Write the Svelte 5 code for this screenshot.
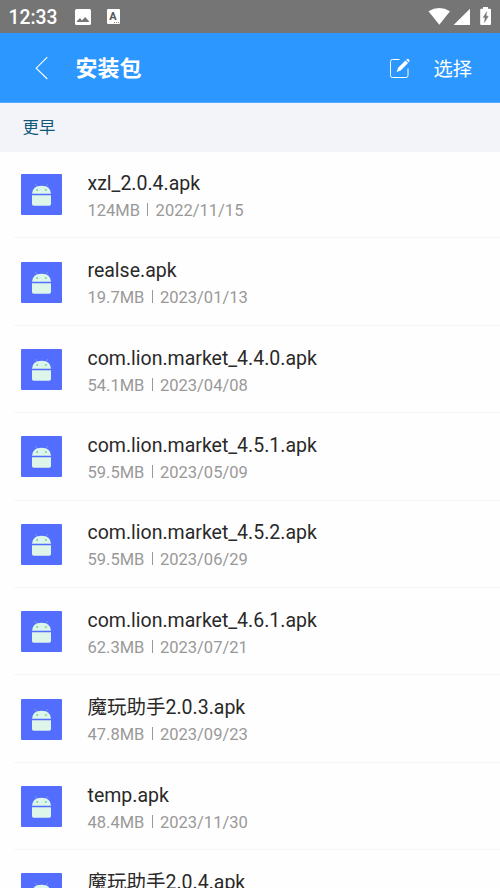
<script lang="ts">
	interface PackageFile {
		name: string;
		size: string;
		date: string;
	}

	const files: PackageFile[] = [
		{ name: 'xzl_2.0.4.apk', size: '124MB', date: '2022/11/15' },
		{ name: 'realse.apk', size: '19.7MB', date: '2023/01/13' },
		{ name: 'com.lion.market_4.4.0.apk', size: '54.1MB', date: '2023/04/08' },
		{ name: 'com.lion.market_4.5.1.apk', size: '59.5MB', date: '2023/05/09' },
		{ name: 'com.lion.market_4.5.2.apk', size: '59.5MB', date: '2023/06/29' },
		{ name: 'com.lion.market_4.6.1.apk', size: '62.3MB', date: '2023/07/21' },
		{ name: '魔玩助手2.0.3.apk', size: '47.8MB', date: '2023/09/23' },
		{ name: 'temp.apk', size: '48.4MB', date: '2023/11/30' },
		{ name: '魔玩助手2.0.4.apk', size: '', date: '' }
	];
</script>

<div class="screen">
	<div class="status">
		<span class="status__time">12:33</span>
		<svg class="status__image" width="16" height="16" viewBox="0 0 16 16" aria-hidden="true">
			<rect width="16" height="16" rx="1.6" fill="#fff" />
			<path d="M2 13v-1l3-3 2 2.4L10.2 8 14 12.2v.8z" fill="#757575" />
		</svg>
		<span class="status__letter">A<i></i></span>
		<svg class="status__signals" width="64" height="20" viewBox="0 0 64 20" aria-hidden="true">
			<path d="M.5 4.3Q11.3-2.5 22 4.3L11.3 17.7z" fill="#fff" />
			<path d="M42 1.8V18H25.6z" fill="#fff" />
			<path d="M55 0h5v1.8h2q1 0 1 1V17q0 1-1 1H53.2q-1 0-1-1V2.8q0-1 1-1H55z" fill="#fff" />
			<path
				d="M58.8 4.8l-3.7 5.7h2l-.7 5 3.9-6.3h-2.2z"
				fill="#757575"
				stroke="#757575"
				stroke-width=".4"
			/>
		</svg>
	</div>

	<header class="bar">
		<button class="bar__back" aria-label="返回">
			<svg width="14" height="24" viewBox="0 0 14 24" aria-hidden="true">
				<path d="M12.3 1.2L1.2 12.2 12.3 23" fill="none" stroke="#fff" stroke-width="1.1" />
			</svg>
		</button>
		<h1>安装包</h1>
		<button class="bar__edit" aria-label="编辑">
			<svg width="22" height="21" viewBox="0 0 22 21" aria-hidden="true">
				<path
					d="M10.5 1.5h-7q-2 0-2 2v14q0 2 2 2H17q2 0 2-2v-7"
					fill="none"
					stroke="#fff"
				/>
				<path d="M7.6 14l1.5-4.2 7.4-7.3L19 5l-7.3 7.4z" fill="#fff" />
				<path d="M17.2 1.8l.9-.8q.7-.5 1.4.1l.8.9q.6.7 0 1.4l-.7.8z" fill="#fff" />
			</svg>
		</button>
		<button class="bar__select">选择</button>
	</header>

	<h2 class="section">更早</h2>

	<ul class="list">
		{#each files as file (file.name)}
			<li class="file">
				<svg class="file__icon" width="41" height="41" viewBox="0 0 41 41" aria-hidden="true">
					<rect width="41" height="41" rx="1" fill="#536dfe" />
					<path d="M14.3 10l1.7 3M26.7 10L25 13" stroke="#83a9f4" stroke-width=".7" />
					<path d="M11 19.8q.5-8 9.500-8t9.500 8z" fill="#def5e9" />
					<circle cx="16.2" cy="16" r="1" fill="#72d3a0" />
					<circle cx="24.9" cy="16" r="1" fill="#72d3a0" />
					<path d="M11 21.3h19V30q0 1.700-1.700 1.700H12.700Q11 31.700 11 30z" fill="#def5e9" />
				</svg>
				<div class="file__text">
					<p class="file__name">{file.name}</p>
					{#if file.size}
						<p class="file__meta">
							<span>{file.size}</span><i class="file__separator"></i><span>{file.date}</span>
						</p>
					{/if}
				</div>
			</li>
		{/each}
	</ul>
</div>

<style>
	:global(body) {
		overflow: hidden;
	}

	.screen {
		display: flex;
		flex-direction: column;
		height: 888px;
		overflow: hidden;
		background: #fefefe;
		color: #292929;
		font-family: Roboto, 'Noto Sans CJK SC', sans-serif;
	}

	h1,
	h2,
	p,
	ul {
		margin: 0;
		padding: 0;
	}

	button {
		display: flex;
		padding: 0;
		border: 0;
		background: none;
		color: inherit;
		font: inherit;
	}

	.status {
		display: flex;
		flex: none;
		align-items: center;
		box-sizing: border-box;
		height: 33px;
		padding: 0 8px 0 8.5px;
		background: #757575;
		color: #fff;
	}

	.status__time {
		width: 66px;
		padding-top: 2px;
		font-size: 19.3px;
		font-weight: 500;
		line-height: 24px;
	}

	.status__letter {
		position: relative;
		width: 13px;
		height: 15px;
		margin-left: 16px;
		border-radius: 1px;
		background: #fff;
		color: #555;
		font-size: 11px;
		font-weight: 700;
		line-height: 15px;
		text-align: center;
	}

	.status__letter i {
		position: absolute;
		right: 1px;
		bottom: 1px;
		width: 5px;
		border-bottom: 1px dotted #888;
	}

	.status__signals {
		margin-left: auto;
	}

	.bar {
		display: flex;
		flex: none;
		align-items: center;
		box-sizing: border-box;
		height: 70px;
		padding: 0 28px 0 35px;
		border-bottom: 1px solid #55adfe;
		background: #2c98ff;
		color: #fff;
	}

	h1 {
		margin-left: 26.5px;
		padding-top: 2px;
		font-size: 22px;
		font-weight: 700;
		line-height: 30px;
	}

	.bar__edit {
		margin-left: auto;
		padding-top: 1px;
	}

	.bar__select {
		margin-left: 22px;
		padding-top: 4px;
		font-size: 19.3px;
		line-height: 28px;
	}

	.section {
		flex: none;
		box-sizing: border-box;
		height: 49px;
		padding-left: 22.5px;
		background: #f3f4f9;
		color: #12587c;
		font-size: 16.4px;
		font-weight: 400;
		line-height: 49px;
	}

	.list {
		margin-top: -1px;
		list-style: none;
	}

	.file {
		position: relative;
		display: flex;
		align-items: flex-start;
		height: 87.4px;
		margin-left: 14px;
	}

	.file:not(:last-child)::after {
		content: '';
		position: absolute;
		right: 0;
		bottom: 0;
		left: 0;
		height: 1px;
		background: #f5f5f5;
	}

	.file__icon {
		flex: none;
		margin: 23.3px 25.5px 0 7px;
	}

	.file__text {
		padding-top: 20.8px;
	}

	.file__name {
		font-size: 19.5px;
		line-height: 24px;
		white-space: nowrap;
	}

	.file__meta {
		display: flex;
		align-items: flex-start;
		margin-top: 4px;
		color: #999;
		font-size: 16.5px;
		line-height: 22px;
	}

	.file__separator {
		width: 1px;
		height: 13px;
		margin: 3px 7.3px 0;
		background: #999;
	}
</style>
